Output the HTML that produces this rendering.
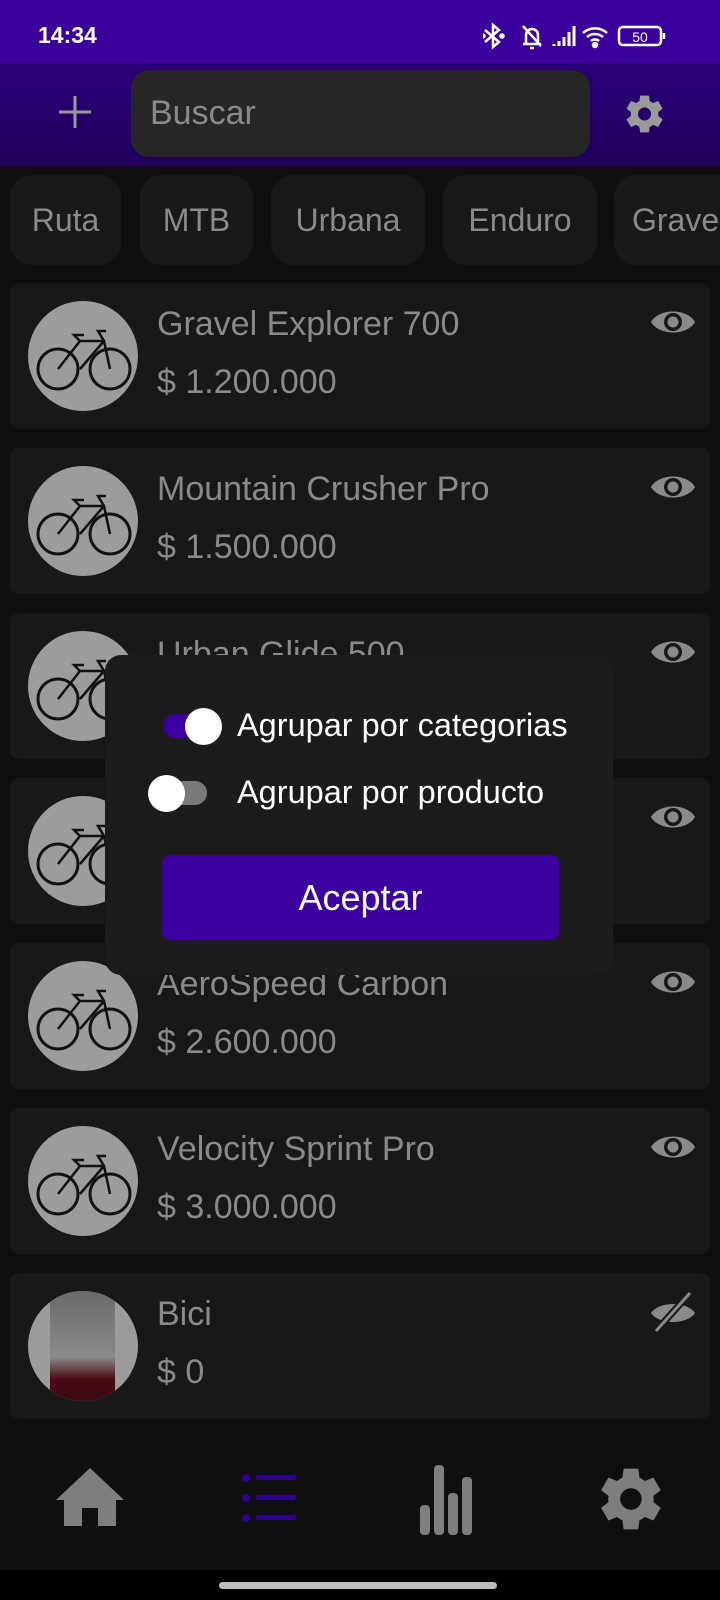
<!DOCTYPE html>
<html><head><meta charset="utf-8"><style>
*{margin:0;padding:0;box-sizing:border-box}
body{width:720px;height:1600px;background:#0f0f0f;font-family:"Liberation Sans",Roboto,sans-serif;position:relative;overflow:hidden}
.sb{position:absolute;top:0;left:0;width:720px;height:63px;background:#3a009c;color:#fff}
.hd{position:absolute;top:63px;left:0;width:720px;height:103px;background:linear-gradient(#2a0078,#1f005a)}
.chip{position:absolute;top:175px;height:90px;background:#181818;border-radius:22px;color:#8a8a8a;font-size:32px;line-height:90px;text-align:center}
.card{position:absolute;left:10px;width:700px;height:146px;background:#181818;border-radius:8px}
.card .im{position:absolute;left:18px;top:18px;width:110px;height:110px;border-radius:50%;background:#9c9c9c;overflow:hidden}
.card .t{position:absolute;left:147px;top:22px;font-size:34px;color:#8a8a8a}
.card .p{position:absolute;left:147px;top:80px;font-size:34px;color:#8a8a8a}
.card .eye{position:absolute;right:14px;top:22px}
.dlg{position:absolute;left:105px;top:655px;width:508px;height:320px;background:#1c1c1c;border-radius:16px}
.lbl{position:absolute;color:#fff;font-size:32.5px}
</style></head><body>
<div class="sb">
<div style="position:absolute;left:38px;top:22px;font-size:23px;font-weight:bold">14:34</div>
<svg style="position:absolute;left:483px;top:22px" width="200" height="28" viewBox="0 0 200 28" fill="none" stroke="#fff" stroke-width="2.5">
<path d="M2 8l14 12-6 5V3l6 5L2 20"/><circle cx="0" cy="14" r="1.5" fill="#fff"/><circle cx="19" cy="14" r="1.5" fill="#fff"/>
<path d="M40 22h18M43 22v-9a6 6 0 0 1 12 0v9M40 4l18 20M47 26h4"/>
<path d="M71 24v-2M76 24v-5M81 24v-9M86 24v-14M91 24v-20" stroke-width="3"/>
<path d="M100 11a18 18 0 0 1 24 0M104 15a12 12 0 0 1 16 0M108 19a6 6 0 0 1 8 0"/><circle cx="112" cy="23" r="2" fill="#fff"/>
<rect x="136" y="5" width="42" height="18" rx="4"/><path d="M181 11v6"/>
<text x="157" y="20" fill="#fff" stroke="none" font-size="14" text-anchor="middle" font-family="Liberation Sans">50</text>
</svg>
</div>
<svg width="0" height="0" style="position:absolute"><defs>
<path id="gear" d="M19.4 13a7.5 7.5 0 0 0 0-2l2.3-1.8-2.3-4-2.7 1.1a7.5 7.5 0 0 0-1.7-1L14.6 2.4h-4.6L9.6 5.3a7.5 7.5 0 0 0-1.7 1L5.2 5.2l-2.3 4L5.2 11a7.5 7.5 0 0 0 0 2l-2.3 1.8 2.3 4 2.7-1.1a7.5 7.5 0 0 0 1.7 1l.4 2.9h4.6l.4-2.9a7.5 7.5 0 0 0 1.7-1l2.7 1.1 2.3-4zM12.3 15.4a3.4 3.4 0 1 1 0-6.8 3.4 3.4 0 0 1 0 6.8z"/>
<g id="bike" fill="none" stroke="#111" stroke-width="3"><circle cx="30" cy="68" r="20"/><circle cx="82" cy="68" r="20"/><path d="M30 68l22-28h24l6 28M52 40l-6-6h10M76 40l-6-10h8M52 68l24-28" stroke-width="2.5"/></g>
<g id="eye"><path d="M1 17C9 3 37 3 45 17C37 31 9 31 1 17z" fill="#8a8a8a"/><circle cx="23" cy="17" r="9" fill="#181818"/><circle cx="23" cy="17" r="5.5" fill="#8a8a8a"/></g>
</defs></svg>
<div class="hd">
<svg style="position:absolute;left:57px;top:31px" width="36" height="36"><path d="M18 2v32M2 18h32" stroke="#9a9a9a" stroke-width="3"/></svg>
<div style="position:absolute;left:131px;top:7px;width:459px;height:87px;background:#262626;border-radius:18px;color:#8a8a8a;font-size:34px;line-height:87px;padding-left:19px">Buscar</div>
<svg style="position:absolute;left:621px;top:28px" width="46" height="46" viewBox="0 0 24 24"><use href="#gear" fill="#9a9a9a"/></svg>
</div>
<div class="chip" style="left:10px;width:111px">Ruta</div>
<div class="chip" style="left:140px;width:113px">MTB</div>
<div class="chip" style="left:271px;width:154px">Urbana</div>
<div class="chip" style="left:443px;width:154px">Enduro</div>
<div class="chip" style="left:614px;width:150px;text-align:left;padding-left:18px">Gravel</div>

<div class="card" style="top:283px"><div class="im"><svg width="110" height="110"><use href="#bike"/></svg></div><div class="t">Gravel Explorer 700</div><div class="p">$ 1.200.000</div><svg class="eye" width="46" height="34"><use href="#eye"/></svg></div>
<div class="card" style="top:448px"><div class="im"><svg width="110" height="110"><use href="#bike"/></svg></div><div class="t">Mountain Crusher Pro</div><div class="p">$ 1.500.000</div><svg class="eye" width="46" height="34"><use href="#eye"/></svg></div>
<div class="card" style="top:613px"><div class="im"><svg width="110" height="110"><use href="#bike"/></svg></div><div class="t">Urban Glide 500</div><div class="p">$ 1.800.000</div><svg class="eye" width="46" height="34"><use href="#eye"/></svg></div>
<div class="card" style="top:778px"><div class="im"><svg width="110" height="110"><use href="#bike"/></svg></div><div class="t">Enduro Max</div><div class="p">$ 2.000.000</div><svg class="eye" width="46" height="34"><use href="#eye"/></svg></div>
<div class="card" style="top:943px"><div class="im"><svg width="110" height="110"><use href="#bike"/></svg></div><div class="t">AeroSpeed Carbon</div><div class="p">$ 2.600.000</div><svg class="eye" width="46" height="34"><use href="#eye"/></svg></div>
<div class="card" style="top:1108px"><div class="im"><svg width="110" height="110"><use href="#bike"/></svg></div><div class="t">Velocity Sprint Pro</div><div class="p">$ 3.000.000</div><svg class="eye" width="46" height="34"><use href="#eye"/></svg></div>
<div class="card" style="top:1273px"><div class="im"><div style="position:absolute;left:22px;top:0;width:65px;height:110px;background:linear-gradient(#6a6a6a 0,#8a8a8a 60%,#4a0a14 80%,#3a0810)"></div></div><div class="t">Bici</div><div class="p">$ 0</div>
<svg class="eye" width="46" height="44" style="top:16px"><path d="M1 24C9 12 37 12 45 24C37 36 9 36 1 24z" fill="#8a8a8a"/><path d="M6 42L40 4" stroke="#181818" stroke-width="7"/><path d="M6 42L40 4" stroke="#8a8a8a" stroke-width="3"/></svg></div>

<!-- nav -->
<svg style="position:absolute;left:56px;top:1466px" width="68" height="62" viewBox="0 0 68 62"><path d="M34 2L0 34h8v26h18V42h16v18h18V34h8z" fill="#7e7e7e"/></svg>
<svg style="position:absolute;left:240px;top:1470px" width="60" height="56"><g fill="#2e0090"><circle cx="6" cy="8" r="4"/><circle cx="6" cy="28" r="4"/><circle cx="6" cy="48" r="4"/><rect x="16" y="5" width="40" height="5"/><rect x="16" y="25" width="40" height="5"/><rect x="16" y="45" width="40" height="5"/></g></svg>
<svg style="position:absolute;left:418px;top:1463px" width="64" height="72"><g fill="#7e7e7e"><rect x="2" y="42" width="10" height="30" rx="4"/><rect x="16" y="2" width="10" height="70" rx="4"/><rect x="30" y="30" width="10" height="42" rx="4"/><rect x="44" y="14" width="10" height="58" rx="4"/></g></svg>
<svg style="position:absolute;left:592px;top:1461px" width="76" height="76" viewBox="0 0 24 24"><use href="#gear" fill="#7e7e7e"/></svg>
<div style="position:absolute;left:0;top:1570px;width:720px;height:30px;background:#000"></div>
<div style="position:absolute;left:219px;top:1582px;width:278px;height:7px;border-radius:4px;background:#bdbdbd"></div>

<div class="dlg">
<div style="position:absolute;left:58px;top:59px;width:56px;height:24px;border-radius:12px;background:#3a00a0"></div>
<div style="position:absolute;left:80px;top:53px;width:37px;height:37px;border-radius:50%;background:#fff"></div>
<div class="lbl" style="left:132px;top:52px">Agrupar por categorias</div>
<div style="position:absolute;left:46px;top:126px;width:56px;height:24px;border-radius:12px;background:#7a7a7a"></div>
<div style="position:absolute;left:43px;top:120px;width:37px;height:37px;border-radius:50%;background:#fff"></div>
<div class="lbl" style="left:132px;top:119px">Agrupar por producto</div>
<div style="position:absolute;left:57px;top:200px;width:397px;height:85px;border-radius:8px;background:#3a00a0;color:#fff;font-size:36px;line-height:85px;text-align:center">Aceptar</div>
</div>
</body></html>
